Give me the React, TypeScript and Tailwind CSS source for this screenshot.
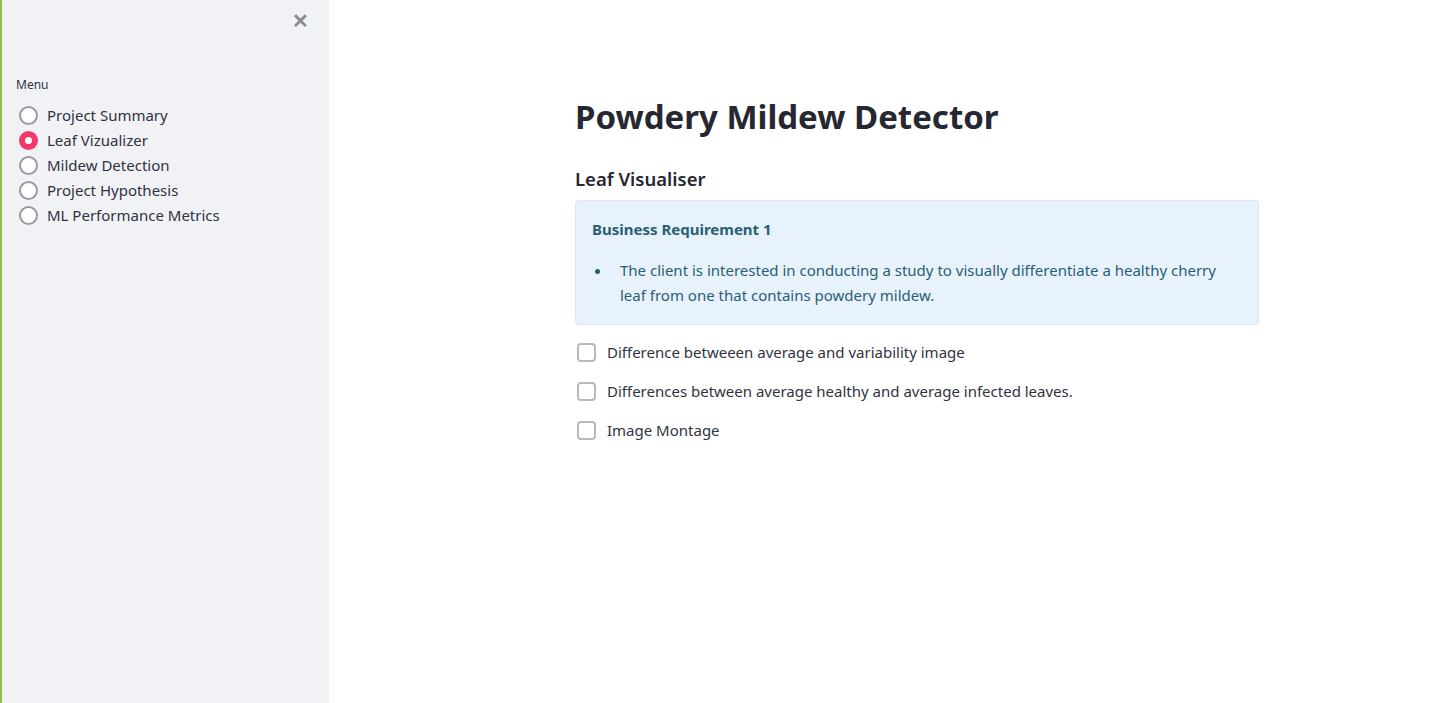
import { useState } from "react";

const PAGES = ["Project Summary", "Leaf Vizualizer", "Mildew Detection", "Project Hypothesis", "ML Performance Metrics"];
const CHECKS = [
  "Difference betweeen average and variability image",
  "Differences between average healthy and average infected leaves.",
  "Image Montage",
];

export default function App() {
  const [page, setPage] = useState("Leaf Vizualizer");
  const [checked, setChecked] = useState<Record<string, boolean>>({});

  return (
    <div className="flex h-[703px] w-full bg-white text-[#262730]" style={{ fontFamily: '"Noto Sans", "Open Sans", sans-serif' }}>
      {/* Sidebar */}
      <aside className="w-[329px] shrink-0 bg-[#f0f2f6] border-l-2 border-[#8bc34a] flex flex-col">
        <div className="flex justify-end pt-[10px] pr-[20px] h-[76px]">
          <button className="text-[#8a8a8f] text-[20px] font-bold leading-none h-[22px]">✕</button>
        </div>
        <div className="pl-[14px]">
          <p className="text-[12px] text-[#31333f] mb-[9px]">Menu</p>
          <div className="flex flex-col">
            {PAGES.map((p) => (
              <label key={p} onClick={() => setPage(p)} className="flex items-center h-[25px] cursor-pointer">
                {page === p ? (
                  <span className="w-[19px] h-[19px] rounded-full bg-[#f03a6a] flex items-center justify-center ml-[3px]">
                    <span className="w-[7px] h-[7px] rounded-full bg-white" />
                  </span>
                ) : (
                  <span className="w-[19px] h-[19px] rounded-full border-2 border-[#9a9aa2] bg-white ml-[3px]" />
                )}
                <span className="ml-[9px] text-[15px] text-[#31333f]">{p}</span>
              </label>
            ))}
          </div>
        </div>
      </aside>

      {/* Main */}
      <main className="flex-1 pl-[246px]">
        <div className="w-[684px] pt-[92px]">
          <h1 className="text-[33px] font-bold text-[#262730] leading-[50px]">Powdery Mildew Detector</h1>
          <h3 className="mt-[23px] text-[18.5px] font-semibold text-[#262730] leading-[28px]">Leaf Visualiser</h3>
          <div className="mt-[7px] rounded-[4px] bg-[#e7f2fc] border border-[#d8e8f6] px-[16px] pt-[17px] pb-[16px] text-[#275f73]">
            <p className="text-[15px] font-bold leading-[22px]">Business Requirement 1</p>
            <ul className="mt-[18px] pl-[20px] list-disc text-[15px] leading-[25px] marker:text-[#275f73]">
              <li className="pl-[8px]">
                The client is interested in conducting a study to visually differentiate a healthy cherry leaf from one that contains powdery mildew.
              </li>
            </ul>
          </div>
          <div className="mt-[16px] flex flex-col gap-[17px] ml-[2px]">
            {CHECKS.map((c) => (
              <label key={c} className="flex items-center h-[22px] cursor-pointer" onClick={() => setChecked({ ...checked, [c]: !checked[c] })}>
                <span className={`w-[19px] h-[19px] rounded-[4px] border-2 ${checked[c] ? "bg-[#f03a6a] border-[#f03a6a]" : "border-[#b8b8bf] bg-white"}`} />
                <span className="ml-[11px] text-[15px] text-[#31333f]">{c}</span>
              </label>
            ))}
          </div>
        </div>
      </main>
    </div>
  );
}
